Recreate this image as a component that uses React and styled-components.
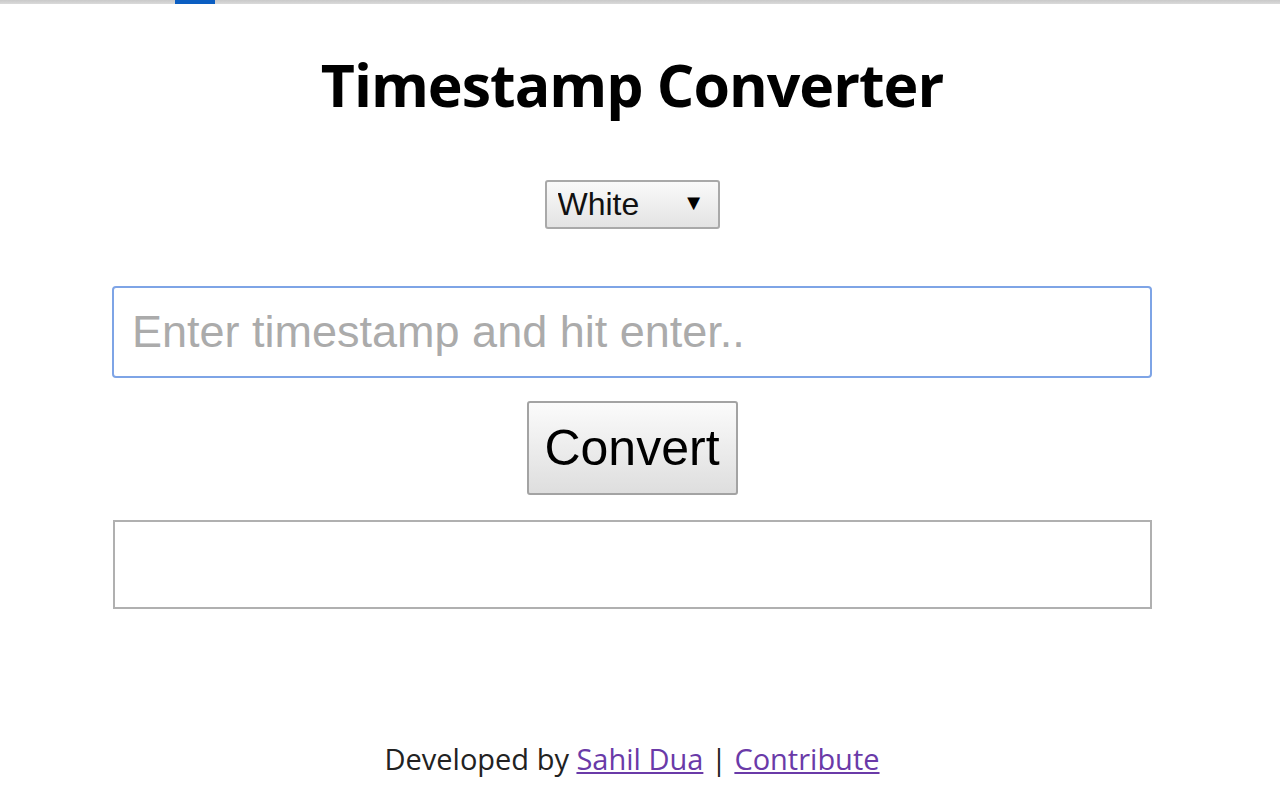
import React from 'react'
import styled, { createGlobalStyle } from 'styled-components'

const GlobalStyle = createGlobalStyle`
  html, body {
    margin: 0;
    padding: 0;
    background: #fff;
  }
  body {
    font-family: "Liberation Sans", Arial, sans-serif;
  }
`;

const App = () => {
  return (
    <>
      <GlobalStyle />
      <TopStrip>
        <span className='active' />
      </TopStrip>
      <Viewport>
        <Page>
          <Title>Timestamp Converter</Title>
          <SelectWrap>
            <select defaultValue='white'>
              <option value='white'>White</option>
              <option value='black'>Black</option>
            </select>
          </SelectWrap>
          <TimestampInput autoFocus placeholder='Enter timestamp and hit enter..' />
          <ConvertButton>Convert</ConvertButton>
          <Output />
          <Footer>
            Developed by <a href='#sahil'>Sahil Dua</a> | <a href='#contribute'>Contribute</a>
          </Footer>
        </Page>
      </Viewport>
    </>
  )
}

export default App

const TopStrip = styled.div`
  height: 4px;
  background: linear-gradient(#c9c9c9, #dadada);
  position: relative;

  .active{
    position: absolute;
    left: 175px;
    top: 0;
    width: 40px;
    height: 4px;
    background: #0b5ec2;
  }
`;

// scrollbar width leaves the content centred at 632
const Viewport = styled.div`
  padding-right: 16px;
`;

const Page = styled.div`
  width: 1040px;
  margin: 0 auto;
  display: flex;
  flex-direction: column;
  align-items: center;
`;

const Title = styled.h1`
  margin: 40px 0 0;
  font-family: "Open Sans", "Noto Sans", sans-serif;
  font-weight: 700;
  font-size: 59px;
  line-height: 80px;
  color: #000;
  letter-spacing: -1px;
`;

const SelectWrap = styled.div`
  position: relative;
  margin-top: 56px;

  select{
    display: block;
    width: 175px;
    height: 49px;
    padding: 0 0 2px 11px;
    font-family: "Liberation Sans", Arial, sans-serif;
    font-size: 32px;
    color: #111;
    border: 2px solid #a9a9a9;
    border-radius: 3px;
    background: linear-gradient(#fafafa, #e3e3e3);
    appearance: none;
    outline: none;
  }

  &::after{
    content: '▼';
    position: absolute;
    right: 15px;
    top: 10px;
    font-family: "Liberation Sans", Arial, sans-serif;
    font-size: 22px;
    color: #000;
    pointer-events: none;
  }
`;

const TimestampInput = styled.input`
  box-sizing: border-box;
  margin-top: 57px;
  width: 1040px;
  height: 92px;
  padding: 0 18px;
  font-family: "Liberation Sans", Arial, sans-serif;
  font-size: 45px;
  color: #222;
  border: 2px solid #7ea4e6;
  border-radius: 4px;
  outline: none;
  caret-color: #000;

  &::placeholder{
    color: #ababab;
  }
`;

const ConvertButton = styled.button`
  margin-top: 23px;
  width: 211px;
  height: 94px;
  padding: 0;
  font-family: "Liberation Sans", Arial, sans-serif;
  font-size: 50px;
  color: #000;
  border: 2px solid #a3a3a3;
  border-radius: 3px;
  background: linear-gradient(#fbfbfb, #dedede);
  cursor: pointer;
`;

const Output = styled.div`
  box-sizing: border-box;
  margin-top: 25px;
  width: 1039px;
  height: 89px;
  border: 2px solid #b0b0b0;
`;

const Footer = styled.p`
  margin: 130px 0 0;
  font-family: "Open Sans", "Noto Sans", sans-serif;
  font-size: 29px;
  color: #222;

  a{
    color: #6a3aa8;
  }
`;
